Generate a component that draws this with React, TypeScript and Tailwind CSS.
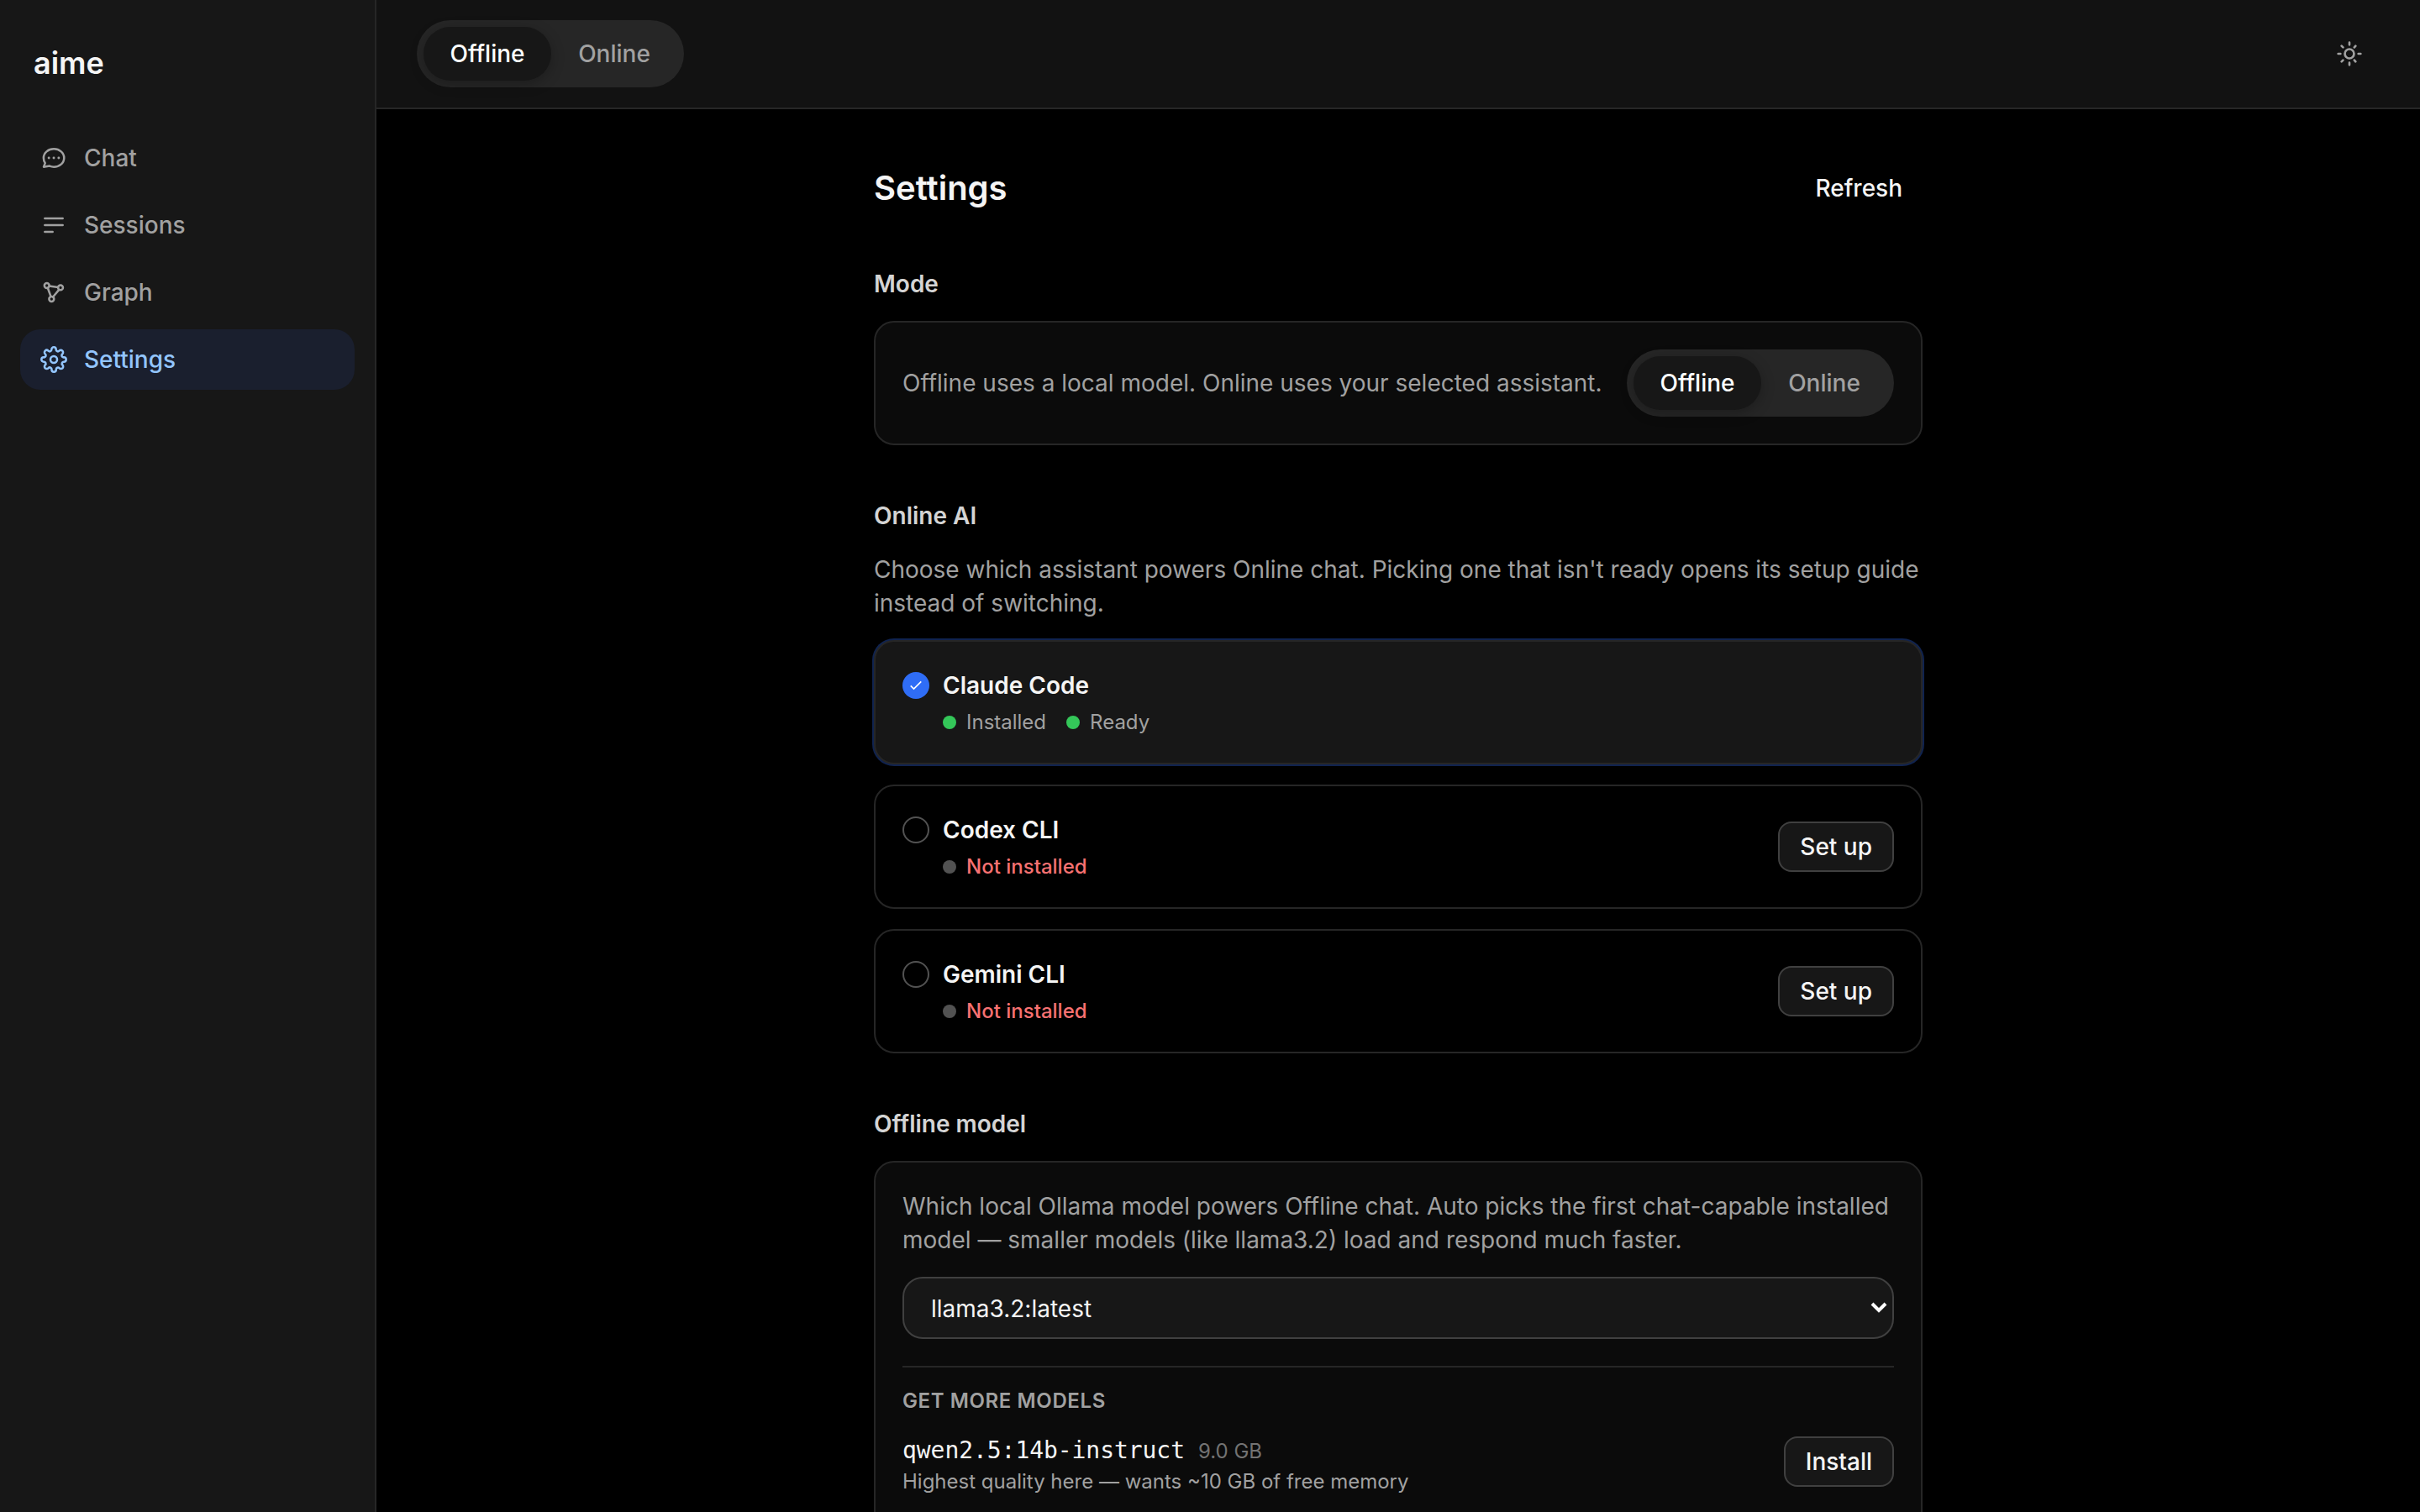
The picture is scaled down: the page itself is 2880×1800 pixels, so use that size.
import clsx from "clsx";
import { useState } from "react";
import type { ReactNode } from "react";

type Mode = "Offline" | "Online";

const navItems = ["Chat", "Sessions", "Graph", "Settings"];

const assistants = [
  { name: "Claude Code", installed: true },
  { name: "Codex CLI", installed: false },
  { name: "Gemini CLI", installed: false },
];

const icons: Record<string, ReactNode> = {
  Chat: (
    <>
      <path d="M12.1 4c5 0 9.1 3.4 9.1 8s-4.1 8-9.1 8c-1.4 0-2.7-.3-3.9-.8L3 20l1.3-3.4C3.4 15.3 2.9 13.7 2.9 12c0-4.6 4.2-8 9.2-8z" />
      <path d="M7.6 12h.01M12 12h.01M16.4 12h.01" strokeWidth="2.2" />
    </>
  ),
  Sessions: <path d="M4 6h16M4 12h16M4 18h7" />,
  Graph: (
    <>
      <circle cx="5.8" cy="6" r="2.2" />
      <circle cx="18" cy="7.8" r="2.2" />
      <circle cx="10" cy="18" r="2.2" />
      <path d="M8 6.4l7.8 1.1M6.6 8.1l2.8 7.7M16.7 9.7l-5.4 6.4" />
    </>
  ),
  Settings: (
    <>
      <circle cx="12" cy="12" r="3" />
      <path d="M19.4 15a1.65 1.65 0 0 0 .33 1.82l.06.06a2 2 0 1 1-2.83 2.83l-.06-.06a1.65 1.65 0 0 0-2.8 1.17V21a2 2 0 0 1-4 0v-.09a1.65 1.65 0 0 0-2.9-1.26l-.06.06a2 2 0 1 1-2.83-2.83l.06-.06A1.65 1.65 0 0 0 3.09 14H3a2 2 0 0 1 0-4h.09A1.65 1.65 0 0 0 4.35 7.1l-.06-.06a2 2 0 1 1 2.83-2.83l.06.06A1.65 1.65 0 0 0 10 3.09V3a2 2 0 0 1 4 0v.09a1.65 1.65 0 0 0 2.82 1.18l.06-.06a2 2 0 1 1 2.83 2.83l-.06.06A1.65 1.65 0 0 0 20.91 10H21a2 2 0 0 1 0 4h-.09a1.65 1.65 0 0 0-1.51 1z" />
    </>
  ),
};

function ModeSwitch({ mode, onChange }: { mode: Mode; onChange: (mode: Mode) => void }) {
  return (
    <div className="flex shrink-0 rounded-full bg-neutral-800 p-2">
      {(["Offline", "Online"] as const).map((item) => (
        <button
          key={item}
          onClick={() => onChange(item)}
          className={clsx(
            "flex h-16 items-center justify-center rounded-full font-medium",
            item === "Offline" ? "w-[152px]" : "w-[150px]",
            mode === item
              ? "bg-neutral-900 text-white shadow-[0_4px_16px_rgba(0,0,0,0.25)]"
              : "text-neutral-400"
          )}
        >
          {item}
        </button>
      ))}
    </div>
  );
}

function Button({ children }: { children: ReactNode }) {
  return (
    <button className="h-[60px] shrink-0 rounded-[16px] border-2 border-neutral-700 bg-neutral-900 px-6 font-medium text-neutral-100">
      {children}
    </button>
  );
}

function SectionTitle({ children }: { children: ReactNode }) {
  return <h2 className="font-semibold text-neutral-300">{children}</h2>;
}

function Dot({ on }: { on?: boolean }) {
  return <span className={clsx("size-4 rounded-full", on ? "bg-[#34c759]" : "bg-neutral-600")} />;
}

export default function App() {
  const [mode, setMode] = useState<Mode>("Offline");
  const [selected, setSelected] = useState("Claude Code");

  return (
    <div className="flex h-[1800px] w-[2880px] overflow-hidden bg-black font-['Inter',sans-serif] text-[28px] leading-10 text-neutral-100">
      <aside className="w-[448px] shrink-0 border-r-2 border-neutral-800 bg-neutral-900 px-6 pt-12">
        <div className="px-4 text-[36px] leading-[54px] font-semibold">aime</div>
        <nav className="mt-[50px] flex flex-col gap-2">
          {navItems.map((item) => (
            <a
              key={item}
              className={clsx(
                "flex h-[72px] items-center gap-5 rounded-[24px] px-6 font-medium",
                item === "Settings" ? "bg-[#1a1f2e] text-[#93c5fd]" : "text-neutral-400"
              )}
            >
              <svg
                className="size-8"
                viewBox="0 0 24 24"
                fill="none"
                stroke="currentColor"
                strokeWidth="1.9"
                strokeLinecap="round"
                strokeLinejoin="round"
              >
                {icons[item]}
              </svg>
              {item}
            </a>
          ))}
        </nav>
      </aside>

      <div className="flex min-w-0 flex-1 flex-col">
        <header className="flex h-[130px] shrink-0 items-center justify-between border-b-2 border-neutral-800 bg-[#121212] px-12">
          <ModeSwitch mode={mode} onChange={setMode} />
          <button className="flex size-[72px] items-center justify-center text-neutral-400">
            <svg
              className="size-8"
              viewBox="0 0 24 24"
              fill="none"
              stroke="currentColor"
              strokeWidth="2"
              strokeLinecap="round"
            >
              <circle cx="12" cy="12" r="4.1" />
              <path d="M12 2v2M12 20v2M2 12h2M20 12h2M5 5l1.3 1.3M16.4 17.7l1.1 1.3M5 19l1.3-1.3M16.4 6.3L17.5 5" />
            </svg>
          </button>
        </header>

        <main className="mx-auto w-[1248px] pt-16">
          <div className="flex h-[60px] items-center justify-between">
            <h1 className="text-[40px] leading-[56px] font-semibold">Settings</h1>
            <button className="px-6 font-medium">Refresh</button>
          </div>

          <section className="mt-16">
            <SectionTitle>Mode</SectionTitle>
            <div className="mt-6 flex h-[148px] items-center justify-between rounded-[24px] border-2 border-neutral-800 bg-[#0b0b0b] px-8">
              <p className="text-neutral-400">Offline uses a local model. Online uses your selected assistant.</p>
              <ModeSwitch mode={mode} onChange={setMode} />
            </div>
          </section>

          <section className="mt-16">
            <SectionTitle>Online AI</SectionTitle>
            <p className="mt-6 text-neutral-400">
              Choose which assistant powers Online chat. Picking one that isn't ready opens its setup guide
              instead of switching.
            </p>
            <div className="mt-6 flex flex-col gap-6">
              {assistants.map(({ name, installed }) => (
                <div
                  key={name}
                  onClick={() => installed && setSelected(name)}
                  className={clsx(
                    "flex h-[148px] items-center justify-between rounded-[24px] border-2 border-neutral-800 px-8",
                    selected === name && "bg-neutral-900 ring-2 ring-[#10234f]"
                  )}
                >
                  <div className="pt-1">
                    <div className="flex items-center gap-4">
                      {selected === name ? (
                        <span className="flex size-8 items-center justify-center rounded-full bg-[#2f6df6]">
                          <svg className="size-5" viewBox="0 0 24 24" fill="none" stroke="white" strokeWidth="2">
                            <path d="M4.5 12.5L9 17 19.5 6.5" />
                          </svg>
                        </span>
                      ) : (
                        <span className="size-8 rounded-full border-2 border-neutral-600" />
                      )}
                      <span className="font-semibold">{name}</span>
                    </div>
                    <div className="mt-1 ml-12 flex items-center gap-6 text-[24px] text-neutral-400">
                      {installed ? (
                        ["Installed", "Ready"].map((status) => (
                          <span key={status} className="flex items-center gap-3">
                            <Dot on />
                            {status}
                          </span>
                        ))
                      ) : (
                        <span className="flex items-center gap-3 font-medium text-[#f87171]">
                          <Dot />
                          Not installed
                        </span>
                      )}
                    </div>
                  </div>
                  {!installed && <Button>Set up</Button>}
                </div>
              ))}
            </div>
          </section>

          <section className="mt-16">
            <SectionTitle>Offline model</SectionTitle>
            <div className="mt-6 h-[520px] rounded-[24px] border-2 border-neutral-800 bg-[#0b0b0b] p-8">
              <p className="text-neutral-400">
                Which local Ollama model powers Offline chat. Auto picks the first chat-capable installed
                model — smaller models (like llama3.2) load and respond much faster.
              </p>
              <div className="mt-6 flex h-[74px] items-center justify-between rounded-[24px] border-2 border-neutral-700 bg-neutral-900 pr-1.5 pl-8">
                <span className="pt-0.5">llama3.2:latest</span>
                <svg className="h-3.5 w-5" viewBox="0 0 20 14" fill="none" stroke="white" strokeWidth="4">
                  <path d="M2 2l8 8 8-8" />
                </svg>
              </div>
              <div className="mt-8 border-t-2 border-neutral-800 pt-6">
                <h3 className="text-[24px] leading-8 font-semibold tracking-[0.6px] text-neutral-400">
                  GET MORE MODELS
                </h3>
                <div className="mt-[23px] flex items-start justify-between">
                  <div>
                    <div className="flex items-baseline gap-4">
                      <span className="font-['DejaVu_Sans_Mono',monospace] tracking-[-0.06px]">
                        qwen2.5:14b-instruct
                      </span>
                      <span className="text-[24px] text-neutral-500">9.0 GB</span>
                    </div>
                    <p className="text-[24px] leading-8 text-neutral-400">
                      Highest quality here — wants ~10 GB of free memory
                    </p>
                  </div>
                  <div className="flex pt-[3px]">
                    <Button>Install</Button>
                  </div>
                </div>
              </div>
            </div>
          </section>
        </main>
      </div>
    </div>
  );
}
